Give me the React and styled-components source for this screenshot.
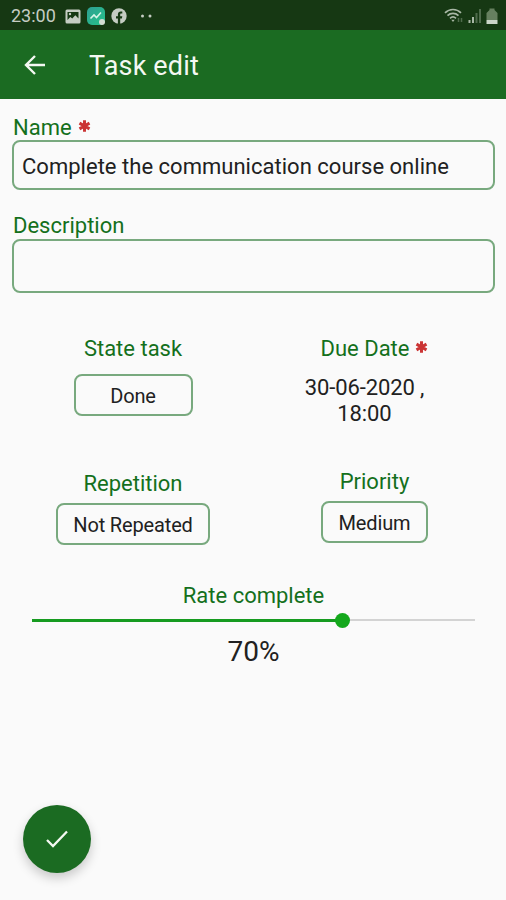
import React, { useState } from 'react';
import styled, { createGlobalStyle } from 'styled-components';

const GlobalStyle = createGlobalStyle`
  * { box-sizing: border-box; }

  body {
    margin: 0;
    background: #fafafa;
    font-family: Roboto, "Liberation Sans", sans-serif;
    color: #212121;
  }

  button, input {
    font-family: inherit;
    color: inherit;
    margin: 0;
  }
`;

const Screen = styled.div`
  width: 506px;
  height: 900px;
  display: flex;
  flex-direction: column;
  overflow: hidden;
  background: #fafafa;
`;

const StatusBar = styled.div`
  height: 30px;
  flex: none;
  display: flex;
  align-items: center;
  justify-content: space-between;
  padding: 2px 8px 0 11px;
  background: #163813;
  color: #c5ccc3;
`;

const StatusGroup = styled.div`
  display: flex;
  align-items: center;
  gap: ${(props) => props.$gap}px;

  svg { display: block; }
`;

const Clock = styled.span`
  width: 46px;
  margin-right: 2px;
  font-size: 18px;
  line-height: 22px;
  white-space: nowrap;
`;

const AppBar = styled.header`
  height: 69px;
  flex: none;
  display: flex;
  align-items: center;
  padding: 2px 22px 0;
  background: #1b6b22;
  color: #f4f8f2;
`;

const IconButton = styled.button`
  display: flex;
  padding: 0 0 2px;
  border: 0;
  background: none;
`;

const Title = styled.h1`
  margin: 0 0 0 41px;
  font-size: 27px;
  font-weight: 400;
  line-height: 34px;
  letter-spacing: 0.15px;
`;

const Form = styled.main`
  flex: 1;
  display: flex;
  flex-direction: column;
  padding: 16px 11px 0 12px;
`;

const Field = styled.div`
  display: flex;
  flex-direction: column;
  gap: ${(props) => props.$gap || 0}px;
  margin-bottom: ${(props) => props.$after}px;
`;

const Label = styled.label`
  display: flex;
  align-items: center;
  gap: 6px;
  padding-left: ${(props) => props.$indent || 0}px;
  height: 25px;
  font-size: 22px;
  line-height: 25px;
  color: #14701c;
  white-space: nowrap;

  svg { margin-bottom: 3px; }
`;

const Input = styled.input`
  height: ${(props) => props.$height}px;
  padding: 2px 8px 0;
  border: 2px solid #78a97e;
  border-radius: 8px;
  background: transparent;
  font-size: 22px;
  letter-spacing: 0.02px;
  outline: none;
`;

const Row = styled.div`
  display: grid;
  grid-template-columns: 242px 241px;
  height: ${(props) => props.$height}px;
`;

const Cell = styled.div`
  display: flex;
  flex-direction: column;
  align-items: center;
  padding-top: ${(props) => props.$top || 0}px;
`;

const Choice = styled.button`
  width: ${(props) => props.$width}px;
  height: 42px;
  margin-top: ${(props) => props.$top}px;
  padding: 2px 0 0;
  border: 2px solid #78a97e;
  border-radius: 8px;
  background: transparent;
  font-size: 20px;
  letter-spacing: -0.15px;
`;

const DueDate = styled.div`
  width: 130px;
  margin: 14px 20px 0 0;
  font-size: 22px;
  line-height: 26px;
  letter-spacing: -0.1px;
  text-align: center;
`;

const Rate = styled.section`
  display: flex;
  flex-direction: column;
  align-items: center;
`;

const Track = styled.div`
  width: 443px;
  height: 16px;
  margin-top: 4px;
  display: flex;
  align-items: center;
`;

const Done = styled.div`
  height: 3px;
  background: #169b20;
`;

const Thumb = styled.div`
  flex: none;
  width: 15px;
  height: 15px;
  margin: 0 -7.5px;
  border-radius: 50%;
  background: #14a81c;
  z-index: 1;
`;

const Rest = styled.div`
  flex: 1;
  height: 2px;
  background: #d3d3d3;
`;

const Percent = styled.div`
  margin-top: 7px;
  font-size: 28px;
  line-height: 33px;
`;

const Footer = styled.footer`
  flex: none;
  height: 95px;
  padding-left: 23px;
`;

const SaveButton = styled.button`
  width: 68px;
  height: 68px;
  display: flex;
  align-items: center;
  justify-content: center;
  padding: 0;
  border: 0;
  border-radius: 50%;
  background: #1b6b22;
  box-shadow: 0 5px 11px rgba(0, 0, 0, 0.2);
`;

function Required() {
  return (
    <svg width="13" height="14" viewBox="0 0 14 14" stroke="#cb3434" strokeWidth="3.2">
      <path d="M7 .8v12.4M1.6 3.9l10.8 6.2M12.4 3.9L1.6 10.1" />
    </svg>
  );
}

function PictureIcon() {
  return (
    <svg width="16" height="15" viewBox="0 0 16 15">
      <rect x=".5" y=".5" width="15" height="14" rx="1.5" fill="#c5ccc3" />
      <path d="M2.5 3h11v6.500l-3.200-3.300-3 3.300-2-1.500-2.800 3z" fill="#163813" />
      <circle cx="5" cy="5" r="1.2" fill="#c5ccc3" />
    </svg>
  );
}

function ChartIcon() {
  return (
    <svg width="18" height="18" viewBox="0 0 18 18">
      <defs>
        <linearGradient id="chart" x1="0" y1="0" x2="1" y2="1">
          <stop offset="0" stopColor="#2f9f93" />
          <stop offset="1" stopColor="#25c489" />
        </linearGradient>
      </defs>
      <rect width="18" height="18" rx="5" fill="url(#chart)" />
      <path d="M3.5 11.500l3.500-3.500 2.500 2.500 4.500-5" fill="none" stroke="#d9f5e9" strokeWidth="1.600" />
      <circle cx="15" cy="15" r="3" fill="#d5ddd3" />
    </svg>
  );
}

function FacebookIcon() {
  return (
    <svg width="16" height="16" viewBox="0 0 16 16">
      <circle cx="8" cy="8" r="7.7" fill="#c5ccc3" />
      <path d="M6.900 16v-5.500H5V8.200h1.900V6.500c0-2 1.100-3.100 2.900-3.100.8 0 1.500.1 1.500.1v2h-1c-.9 0-1.100.5-1.100 1.100v1.600h2.100l-.4 2.300H9.200V16z" fill="#163813" />
    </svg>
  );
}

function WifiIcon() {
  return (
    <svg width="20" height="16" viewBox="0 0 20 16" fill="none" stroke="#a9b8a6" strokeWidth="1.700">
      <path d="M1 4.800c4.500-4.400 11.500-4.400 16 0M3.500 7.700c3.200-3 7.800-3 11 0M6 10.300c1.800-1.600 4.200-1.600 6 0" />
      <path d="M7.300 11.800L9 14l1.700-2.200z" fill="#a9b8a6" stroke="none" />
      <path d="M14.500 10v4M17.500 10v4" stroke="#4f6b4c" strokeWidth="1.500" />
    </svg>
  );
}

function SignalIcon() {
  return (
    <svg width="14" height="16" viewBox="0 0 14 16">
      <path d="M.5 12h2v3h-2zM4 9h2v6H4z" fill="#a9b8a6" />
      <path d="M7.500 5h2v10h-2zM11 1h2v14h-2z" fill="#4f6b4c" />
    </svg>
  );
}

function BatteryIcon() {
  return (
    <svg width="12" height="17" viewBox="0 0 12 17">
      <path d="M3.500 2V.5h5V2L11.500 5v7H.5V5z" fill="#66805f" />
      <path d="M.5 12h11v4H.5z" fill="#cbd5c8" />
    </svg>
  );
}

function App() {
  const [name, setName] = useState('Complete the communication course online');
  const [description, setDescription] = useState('');
  const rate = 70;

  return (
    <Screen>
      <GlobalStyle />
      <StatusBar>
        <StatusGroup $gap={6}>
          <Clock>23:00</Clock>
          <PictureIcon />
          <ChartIcon />
          <FacebookIcon />
          <svg width="24" height="4" viewBox="0 0 24 4" fill="#c5ccc3">
            <circle cx="9.5" cy="2" r="1.5" />
            <circle cx="17" cy="2" r="1.5" />
          </svg>
        </StatusGroup>
        <StatusGroup $gap={4}>
          <WifiIcon />
          <SignalIcon />
          <BatteryIcon />
        </StatusGroup>
      </StatusBar>

      <AppBar>
        <IconButton aria-label="Back">
          <svg width="26" height="26" viewBox="0 0 26 26" fill="none" stroke="#f4f8f2" strokeWidth="2.400">
            <path d="M23 13H5M13 4l-9 9 9 9" />
          </svg>
        </IconButton>
        <Title>Task edit</Title>
      </AppBar>

      <Form>
        <Field $after={23}>
          <Label $indent={1}>Name <Required /></Label>
          <Input $height={50} value={name} onChange={(e) => setName(e.target.value)} />
        </Field>
        <Field $gap={1} $after={43}>
          <Label $indent={1}>Description</Label>
          <Input $height={54} value={description} onChange={(e) => setDescription(e.target.value)} />
        </Field>

        <Row $height={133}>
          <Cell>
            <Label as="span">State task</Label>
            <Choice $width={119} $top={13}>Done</Choice>
          </Cell>
          <Cell>
            <Label as="span">Due Date <Required /></Label>
            <DueDate>30-06-2020 , 18:00</DueDate>
          </Cell>
        </Row>
        <Row $height={114}>
          <Cell $top={2}>
            <Label as="span">Repetition</Label>
            <Choice $width={154} $top={7}>Not Repeated</Choice>
          </Cell>
          <Cell>
            <Label as="span">Priority</Label>
            <Choice $width={107} $top={7}>Medium</Choice>
          </Cell>
        </Row>

        <Rate>
          <Label as="span">Rate complete</Label>
          <Track>
            <Done style={{ width: `${rate}%` }} />
            <Thumb />
            <Rest />
          </Track>
          <Percent>{rate}%</Percent>
        </Rate>
      </Form>

      <Footer>
        <SaveButton aria-label="Save">
          <svg width="24" height="20" viewBox="0 0 24 20" fill="none" stroke="#f4f8f2" strokeWidth="2.300">
            <path d="M2 11l6 6L22 2.500" />
          </svg>
        </SaveButton>
      </Footer>
    </Screen>
  );
}

export default App;
